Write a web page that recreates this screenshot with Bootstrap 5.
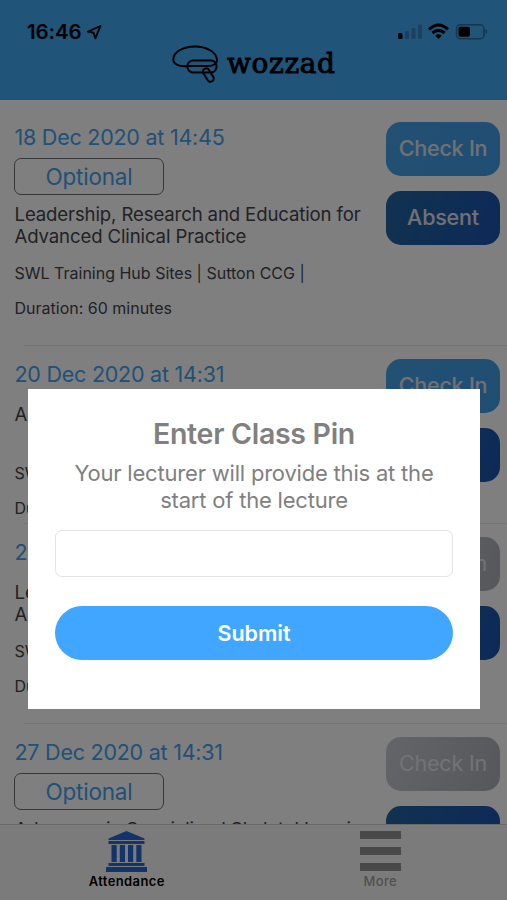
<!DOCTYPE html>
<html lang="en">
<head>
<meta charset="utf-8">
<meta name="viewport" content="width=device-width, initial-scale=1">
<title>Wozzad – Attendance</title>
<link href="https://cdn.jsdelivr.net/npm/bootstrap@5.3.0/dist/css/bootstrap.min.css" rel="stylesheet">
<style>
body{font-family:Inter,"Liberation Sans",sans-serif;background:#fff;height:900px;width:507px;color:#44444c}
.screen{height:900px}
.topbar{height:99.5px;background:#41a8f2;color:#000}
.status{padding:20px 18px 0 27px;height:42px}
.clock{font-size:20.5px;font-weight:600;line-height:24px;letter-spacing:-.1px}
.brand{height:40px;margin-top:2px;margin-left:171px}
.wordmark{font-family:"DejaVu Serif",serif;font-size:28px;line-height:36px;letter-spacing:.6px;margin-top:2px;-webkit-text-stroke:.9px #000}
.feed{padding-top:8px}
.lecture{padding:17px 7px 0 14.5px}
.lecture+.lecture::before{content:"";position:absolute;left:24px;right:0;top:0;height:1px;background:#e9e9ea}
.when{color:#42a2ec;font-size:21.5px;line-height:24px;letter-spacing:-.24px}
.tag{width:150px;height:37px;margin:9px 0 0 -.5px;border:1.5px solid #6e6e6e;border-radius:7px;color:#42a2ec;font-size:22.5px;line-height:35px;letter-spacing:-.2px}
.subject{font-size:18.6px;line-height:22.7px;letter-spacing:-.13px;margin-top:17px;width:366px;min-height:45px}
.tag+.subject{margin-top:8px}
.meta{font-size:16px;line-height:20px;margin-top:15px}
.actions{width:114px;gap:15px;margin-top:-3px}
.act{height:54px;border:0;border-radius:15px;color:#e2e2e6;font-size:21.5px;font-weight:500;letter-spacing:-.2px;padding:0;white-space:nowrap}
.act-in{background:linear-gradient(110deg,#46a2e6,#3f9ce8)}
.act-away{background:linear-gradient(110deg,#22659f,#1a54b0)}
.act-off{background:linear-gradient(110deg,#c6cad0,#abafb8);color:#e4e6ec;font-weight:400}
.tabs{height:76px;background:#f7f7f7;border-top:1px solid #d4d4d4;padding-top:6px}
.tabs-label{font-size:13px;line-height:18px;letter-spacing:.4px}
.shade{background:rgba(0,0,0,.5);padding:389px 27px 0 28px}
.pin{height:320px;background:#fff;color:#808080;padding:29px 27px 0}
.pin h1{font-size:28.5px;line-height:34px;font-weight:600;letter-spacing:-.3px;margin:-1px 0 9px}
.pin p{font-size:22px;line-height:27px;letter-spacing:-.2px;margin:0 0 16px}
.pin input{height:47px;border:1px solid #e3e3e3;border-radius:7px}
.send{height:54px;margin-top:29px;background:#40a6ff;color:#fff;font-size:21.5px;font-weight:600;border:0}
.muted-label{color:#a0a0a0}
</style>
<script src="https://cdn.jsdelivr.net/npm/bootstrap@5.3.0/dist/js/bootstrap.bundle.min.js"></script>
</head>
<body>
<div class="screen d-flex flex-column overflow-hidden">
  <header class="topbar flex-shrink-0">
    <div class="status d-flex justify-content-between">
      <div class="d-flex"><span class="clock">16:46</span>
        <svg class="ms-1 mt-1" width="16" height="16" viewBox="0 0 16 16" fill="none" stroke="#000" stroke-width="1.900" stroke-linejoin="round"><path d="M2 7.600 14.500 2 9.300 14.300 7.600 8.800z"/></svg></div>
      <svg width="92" height="24" viewBox="0 0 92 24">
        <rect x="1" y="13" width="4.500" height="6" rx="1.500"/>
        <g opacity=".2"><rect x="8" y="11" width="4" height="8" rx="1.300"/><rect x="14.500" y="8" width="4" height="11" rx="1.300"/><rect x="21" y="4.500" width="4" height="14.500" rx="1.300"/></g>
        <g fill="none" stroke="#000" stroke-width="3"><path d="M32 9.300Q41.500.800 51 9.300"/><path d="M35.500 13Q41.500 7.800 47.500 13"/></g><path d="M38.300 15.700Q41.500 13 44.700 15.700L41.500 19z"/>
        <rect x="59.500" y="4.800" width="27.500" height="14" rx="4" fill="none" stroke="#000" stroke-opacity=".35" stroke-width="1.500"/><rect x="61.500" y="6.800" width="11.500" height="10" rx="2"/><path d="M88.500 9q3 2.500 0 5.500z" opacity=".4"/>
      </svg>
    </div>
    <div class="brand d-flex">
      <svg width="56" height="42" viewBox="0 0 56 42" fill="none" stroke="#000" stroke-width="2">
        <path d="M17 22C8 23 2.300 20 2.300 15.500 2.300 8 12 2.500 24 2.500c11 0 21 5 22 13 .3 4-3 6.500-9 6.500H17z"/>
        <rect x="16.500" y="16.500" width="29" height="12" rx="5.500"/>
        <rect x="34" y="24" width="6.500" height="14.500" rx="3.200" transform="rotate(-32 37 31)"/>
      </svg>
      <span class="wordmark">wozzad</span>
    </div>
  </header>

  <main class="feed flex-grow-1 overflow-hidden">
    <section class="lecture position-relative d-flex justify-content-between" style="height:237px">
      <div>
        <div class="when">18 Dec 2020 at 14:45</div>
        <div class="tag text-center">Optional</div>
        <div class="subject">Leadership, Research and Education for Advanced Clinical Practice</div>
        <div class="meta">SWL Training Hub Sites | Sutton CCG |</div>
        <div class="meta">Duration: 60 minutes</div>
      </div>
      <div class="actions d-flex flex-column flex-shrink-0"><button class="btn act act-in">Check In</button><button class="btn act act-away">Absent</button></div>
    </section>
    <section class="lecture position-relative d-flex justify-content-between" style="height:178px">
      <div>
        <div class="when">20 Dec 2020 at 14:31</div>
        <div class="subject">Advances in Specialized Skeletal Imaging</div>
        <div class="meta">SWL Training Hub Sites | Sutton CCG |</div>
        <div class="meta">Duration: 60 minutes</div>
      </div>
      <div class="actions d-flex flex-column flex-shrink-0"><button class="btn act act-in">Check In</button><button class="btn act act-away">Absent</button></div>
    </section>
    <section class="lecture position-relative d-flex justify-content-between" style="height:200px">
      <div>
        <div class="when">22 Dec 2020 at 14:45</div>
        <div class="subject">Leadership, Research and Education for Advanced Clinical Practice</div>
        <div class="meta">SWL Training Hub Sites | Sutton CCG |</div>
        <div class="meta">Duration: 60 minutes</div>
      </div>
      <div class="actions d-flex flex-column flex-shrink-0"><button class="btn act act-off">Check In</button><button class="btn act act-away">Absent</button></div>
    </section>
    <section class="lecture position-relative d-flex justify-content-between" style="height:237px">
      <div>
        <div class="when">27 Dec 2020 at 14:31</div>
        <div class="tag text-center">Optional</div>
        <div class="subject">Advances in Specialized Skeletal Imaging</div>
      </div>
      <div class="actions d-flex flex-column flex-shrink-0"><button class="btn act act-off">Check In</button><button class="btn act act-away">Absent</button></div>
    </section>
  </main>

  <nav class="tabs d-flex flex-shrink-0 text-center">
    <div class="w-50">
      <svg class="d-block mx-auto" width="41" height="41" viewBox="0 0 41 41" fill="#2468d4"><path d="M20.500 0 38.500 7.500V9H2.500V7.500zM2.500 10h36v3h-36zM5.500 14h5.200v17H5.500zM13.800 14H19v17h-5.200zM22 14h5.200v17H22zM30.300 14h5.200v17h-5.200zM2.500 32h36v3h-36zM0 36h41v5H0z"/></svg>
      <div class="tabs-label fw-semibold text-black">Attendance</div>
    </div>
    <div class="w-50">
      <svg class="d-block mx-auto" width="41" height="41" viewBox="0 0 41 41" fill="#929292"><path d="M0 0h41v8H0zM0 16h41v8H0zM0 32h41v8H0z"/></svg>
      <div class="tabs-label fw-medium muted-label">More</div>
    </div>
  </nav>
</div>

<div class="shade position-fixed top-0 start-0 w-100 h-100">
  <form class="pin text-center">
    <h1>Enter Class Pin</h1>
    <p>Your lecturer will provide this at the start of the lecture</p>
    <input class="form-control shadow-none" type="text" aria-label="Class pin">
    <button class="btn send rounded-pill w-100" type="button">Submit</button>
  </form>
</div>
</body>
</html>
